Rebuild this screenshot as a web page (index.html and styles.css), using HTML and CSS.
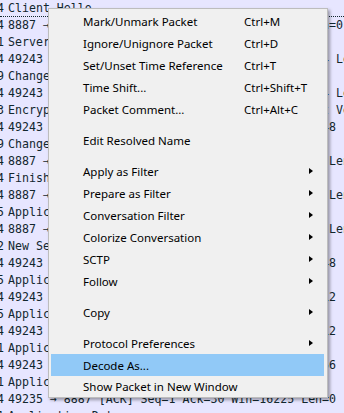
FILE: index.html
```html
<!DOCTYPE html>
<html lang="en">
<head>
    <meta charset="UTF-8">
    <meta name="viewport" content="width=device-width, initial-scale=1.0">
    <title>Packet List</title>
    <link rel="stylesheet" href="styles.css">
</head>
<body>
    <div class="packets">
        <div class="row selected"><span class="len">4</span><span class="info">Client Hello</span></div>
        <div class="row"><span class="len">4</span><span class="info">8887 → 49243 [ACK] Seq=1 Ack=135 Win=65536 Len=0</span></div>
        <div class="row"><span class="len">1</span><span class="info">Server Hello, Certificate, Server Hello Done</span></div>
        <div class="row"><span class="len">4</span><span class="info">49243 → 8887 [ACK] Seq=135 Ack=2897 Win=262144 Len=0</span></div>
        <div class="row"><span class="len">9</span><span class="info">Change Cipher Spec</span></div>
        <div class="row"><span class="len">4</span><span class="info">49243 → 8887 [ACK] Seq=135 Ack=4345 Win=262144 Len=0</span></div>
        <div class="row"><span class="len">3</span><span class="info">Encrypted Handshake Message, Certificate, Cert Verify</span></div>
        <div class="row"><span class="len">4</span><span class="info">49243 → 8887 [PSH, ACK] Seq=135 Ack=57 Len=1448</span></div>
        <div class="row"><span class="len">9</span><span class="info">Change Cipher Spec, Finished</span></div>
        <div class="row"><span class="len">4</span><span class="info">8887 → 49243 [ACK] Seq=135 Ack=1448 Win=65536 Len=0</span></div>
        <div class="row"><span class="len">4</span><span class="info">Finished</span></div>
        <div class="row"><span class="len">4</span><span class="info">8887 → 49243 [ACK] Seq=135 Ack=2896 Win=65536 Len=0</span></div>
        <div class="row"><span class="len">5</span><span class="info">Application Data</span></div>
        <div class="row"><span class="len">4</span><span class="info">8887 → 49243 [ACK] Seq=135 Ack=4344 Win=65536 Len=0</span></div>
        <div class="row"><span class="len">2</span><span class="info">New Session Ticket, Change Cipher Spec</span></div>
        <div class="row"><span class="len">4</span><span class="info">49243 → 8887 [PSH, ACK] Seq=135 Ack=57 Len=1448</span></div>
        <div class="row"><span class="len">5</span><span class="info">Application Data</span></div>
        <div class="row"><span class="len">4</span><span class="info">49243 → 8887 [PSH, ACK] Seq=135 Ack=57 Len=1412</span></div>
        <div class="row"><span class="len">5</span><span class="info">Application Data</span></div>
        <div class="row"><span class="len">4</span><span class="info">49243 → 8887 [PSH, ACK] Seq=135 Ack=57 Len=1412</span></div>
        <div class="row"><span class="len">1</span><span class="info">Application Data</span></div>
        <div class="row"><span class="len">4</span><span class="info">49243 → 8887 [PSH, ACK] Seq=135 Ack=57 Len=1456</span></div>
        <div class="row"><span class="len">1</span><span class="info">Application Data</span></div>
        <div class="row"><span class="len">4</span><span class="info">49235 → 8887 [ACK] Seq=1 Ack=30 Win=16225 Len=0</span></div>
        <div class="row"><span class="len">1</span><span class="info">Application Data</span></div>
    </div>

    <div class="menu">
        <div class="item"><span class="label">Mark/Unmark Packet</span><span class="key">Ctrl+M</span></div>
        <div class="item"><span class="label">Ignore/Unignore Packet</span><span class="key">Ctrl+D</span></div>
        <div class="item"><span class="label">Set/Unset Time Reference</span><span class="key">Ctrl+T</span></div>
        <div class="item"><span class="label">Time Shift...</span><span class="key">Ctrl+Shift+T</span></div>
        <div class="item"><span class="label">Packet Comment...</span><span class="key">Ctrl+Alt+C</span></div>
        <div class="sep"></div>
        <div class="item"><span class="label">Edit Resolved Name</span></div>
        <div class="sep"></div>
        <div class="item"><span class="label">Apply as Filter</span><span class="arrow"></span></div>
        <div class="item"><span class="label">Prepare as Filter</span><span class="arrow"></span></div>
        <div class="item"><span class="label">Conversation Filter</span><span class="arrow"></span></div>
        <div class="item"><span class="label">Colorize Conversation</span><span class="arrow"></span></div>
        <div class="item"><span class="label">SCTP</span><span class="arrow"></span></div>
        <div class="item"><span class="label">Follow</span><span class="arrow"></span></div>
        <div class="sep"></div>
        <div class="item"><span class="label">Copy</span><span class="arrow"></span></div>
        <div class="sep"></div>
        <div class="item"><span class="label">Protocol Preferences</span><span class="arrow"></span></div>
        <div class="item active"><span class="label">Decode As...</span></div>
        <div class="item last"><span class="label">Show Packet in New Window</span></div>
    </div>
</body>
</html>
```

FILE: styles.css
```css
body {
    margin: 0;
    background-color: #e7e6ff;
    overflow: hidden;
}
.packets {
    width: 344px;
    overflow: hidden;
    font-family: "DejaVu Sans Mono", monospace;
    font-size: 11.6px;
    color: #12272e;
}
.row {
    height: 17px;
    line-height: 17px;
    white-space: nowrap;
    box-sizing: border-box;
}
.row.selected {
    border-bottom: 1px dotted #12272e;
    line-height: 16px;
}
.len {
    display: inline-block;
    width: 11px;
    margin-left: -3px;
}
.menu {
    position: absolute;
    left: 48px;
    top: 8px;
    width: 280px;
    box-sizing: border-box;
    padding: 1px 3px 0 2px;
    background-color: #f0f0f0;
    border: 1px solid #bdbdbd;
    box-shadow: 2px 2px 3px rgba(0, 0, 0, 0.35);
    font-family: "Noto Sans", sans-serif;
    font-size: 11.5px;
    color: #000;
}
.item {
    display: flex;
    align-items: center;
    height: 22px;
    padding-left: 32px;
    white-space: nowrap;
}
.item.last {
    height: 21px;
}
.item.active {
    background-color: #91c9f7;
}
.label {
    flex: 0 0 161px;
}
.arrow {
    margin-left: auto;
    margin-right: 11px;
    width: 0;
    height: 0;
    border-left: 4px solid #000;
    border-top: 3.5px solid transparent;
    border-bottom: 3.5px solid transparent;
}
.sep {
    height: 9px;
    margin-left: 28px;
    box-sizing: border-box;
    border-bottom: 5px solid #f0f0f0;
    background-color: #d7d7d7;
    background-clip: content-box;
    padding-top: 4px;
}
```
